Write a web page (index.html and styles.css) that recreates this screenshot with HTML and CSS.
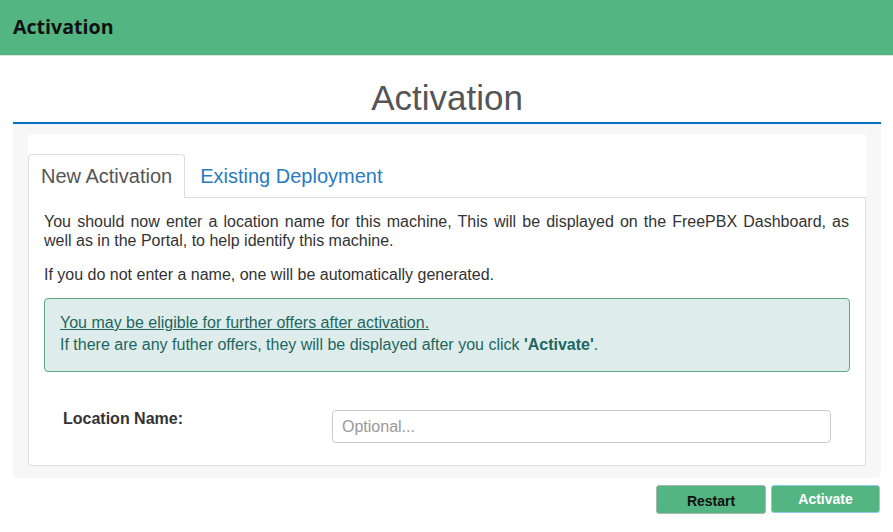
FILE: index.html
```html
<!DOCTYPE html>
<html>
<head>
<meta charset="utf-8">
<link rel="stylesheet" href="styles.css">
</head>
<body>
<header class="topbar"><span class="topbar-title">Activation</span></header>
<main class="page">
  <h1 class="page-title">Activation</h1>
  <section class="panel">
    <div class="card">
      <ul class="tabs">
        <li class="tab active">New Activation</li>
        <li class="tab">Existing Deployment</li>
      </ul>
      <div class="tab-content">
        <p class="para">You should now enter a location name for this machine, This will be displayed on the FreePBX Dashboard, as well as in the Portal, to help identify this machine.</p>
        <p class="para para-last">If you do not enter a name, one will be automatically generated.</p>
        <div class="alert">
          <div class="alert-line"><span class="u">You may be eligible for further offers after activation.</span></div>
          <div class="alert-line">If there are any futher offers, they will be displayed after you click <b>'Activate'</b>.</div>
        </div>
        <div class="form-row">
          <label class="label">Location Name:</label>
          <input class="input" type="text" placeholder="Optional...">
        </div>
      </div>
    </div>
  </section>
  <div class="actions">
    <button class="btn btn-restart">Restart</button>
    <button class="btn btn-activate">Activate</button>
  </div>
</main>
</body>
</html>
```
FILE: styles.css
```css
* { box-sizing: border-box; }
html, body { margin: 0; padding: 0; background: #fff; }
body { font-family: "Liberation Sans", Arial, sans-serif; color: #333; }

.topbar {
  height: 56px;
  background: #52b582;
  border-bottom: 1px solid #e3e3e3;
  display: flex;
  align-items: center;
  padding: 0 13px 2px;
}
.topbar-title {
  font-family: "Open Sans", sans-serif;
  font-weight: 700;
  font-size: 19.6px;
  color: #111;
}

.page { margin: 0 12px 0 13px; }

.page-title {
  margin: 22px 0 0;
  padding-bottom: 4px;
  font-weight: 400;
  font-size: 35px;
  line-height: 40px;
  color: #555;
  text-align: center;
  border-bottom: 2px solid #0070c0;
}

.panel {
  background: #f7f7f7;
  padding: 10px 15px 12px 15px;
  border-radius: 0 0 5px 5px;
}

.card {
  background: #fff;
  padding-top: 20px;
  border-radius: 4px;
}

.tabs {
  list-style: none;
  margin: 0;
  padding: 0;
  display: flex;
  border-bottom: 1px solid #ddd;
}
.tab {
  font-size: 20px;
  line-height: 22px;
  padding: 10px 12px 10px 12px;
  border: 1px solid transparent;
  border-radius: 4px 4px 0 0;
  margin-right: 2px;
  margin-bottom: -1px;
  color: #2a7abf;
}
.tab.active {
  color: #555;
  border-color: #ddd;
  border-bottom-color: #fff;
  background: #fff;
}

.tab-content {
  border: 1px solid #ddd;
  border-top: none;
  border-radius: 0 0 4px 4px;
  padding: 14px 15px 22px;
}

.para {
  margin: 0 1px 15px 0;
  font-size: 16px;
  line-height: 19px;
  text-align: justify;
}
.para-last { margin-bottom: 14px; }

.alert {
  margin-top: 0;
  background: #deedec;
  border: 1px solid #5aa886;
  border-radius: 4px;
  padding: 13px 15px 15px;
  color: #1e6660;
  font-size: 16px;
  line-height: 22px;
}
.alert .u { text-decoration: underline; }
.alert b { font-weight: 700; }

.form-row {
  display: flex;
  align-items: flex-start;
  margin-top: 38px;
  padding: 0 19px;
}
.label {
  width: 269px;
  flex: none;
  font-weight: 700;
  font-size: 16px;
  line-height: 18px;
  padding-top: 0;
  color: #333;
}
.input {
  flex: 1;
  height: 33px;
  border: 1px solid #ccc;
  border-radius: 4px;
  padding: 0 9px;
  font-family: "Liberation Sans", Arial, sans-serif;
  font-size: 16px;
  color: #555;
  background: #fff;
  outline: none;
}
.input::placeholder { color: #999; }

.actions {
  display: flex;
  justify-content: flex-end;
  gap: 5px;
  padding-top: 7px;
  padding-right: 1px;
}
.btn {
  font-family: "Liberation Sans", Arial, sans-serif;
  font-weight: 700;
  font-size: 14px;
  background: #52b582;
  border-radius: 3px;
  cursor: pointer;
}
.btn-restart {
  width: 110px;
  height: 29px;
  border: 1px solid #a9b4ae;
  color: #111;
  padding: 2px 0 0;
}
.btn-activate {
  width: 109px;
  height: 28px;
  border: 1px solid #8ec9e6;
  color: #fff;
  padding: 0 0 1px;
}
```
